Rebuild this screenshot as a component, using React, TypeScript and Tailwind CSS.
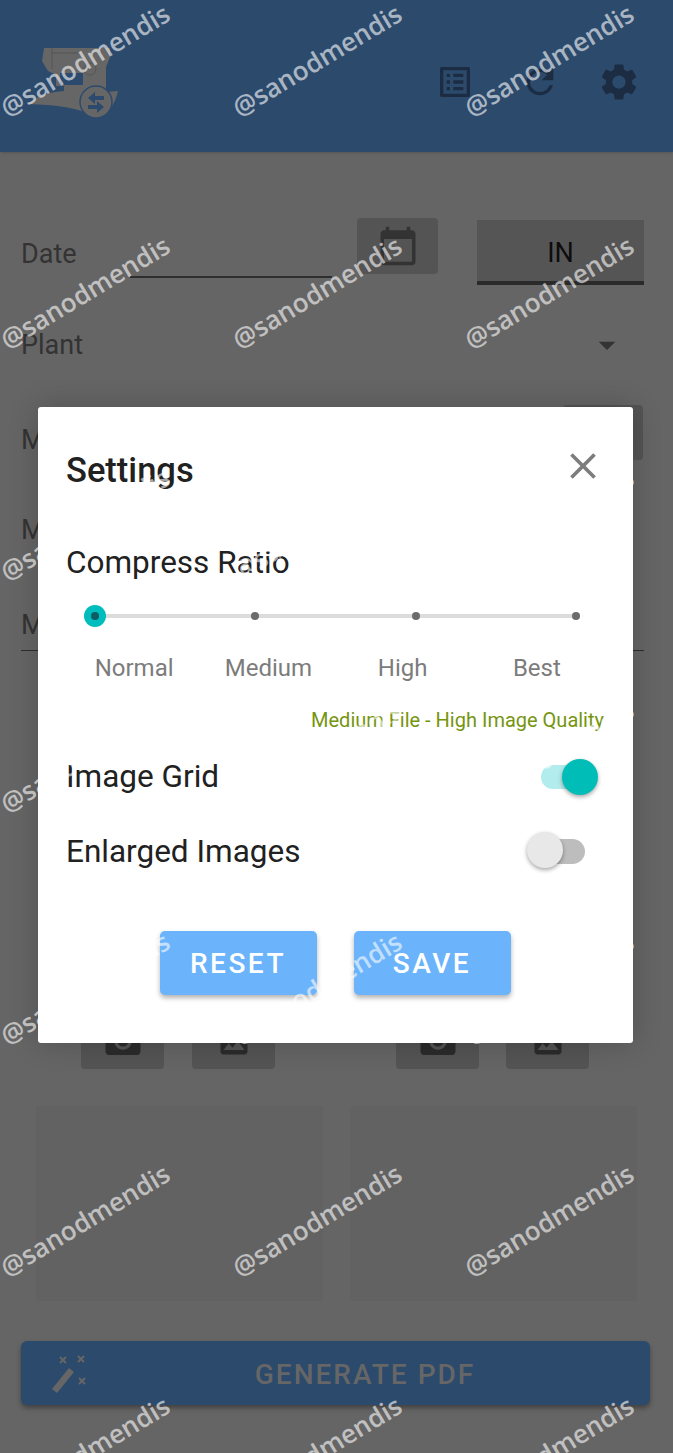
import React from "react";
import {
  MdArrowDropDown,
  MdCalendarToday,
  MdCameraAlt,
  MdClose,
  MdImage,
  MdListAlt,
  MdRefresh,
  MdSettings,
} from "react-icons/md";

const sliderStops = ["Normal", "Medium", "High", "Best"];

function Logo() {
  return (
    <svg viewBox="0 0 90 80" className="h-[80px] w-[90px]">
      <path
        d="M16 3 H82 V12 L78 22 V47 L90 46 C87 60 80 68 70 73 C50 62 28 60 0 59 C10 50 22 47 36 46 V41 H28 V30 L20 26 L14 16 Z"
        fill="#666"
      />
      <circle cx="68" cy="57" r="16" fill="#666" stroke="#2c4a6e" strokeWidth="1.5" />
      <path d="M60 53 L67 47 V51 H76 V55 H67 V59 Z M76 62 L69 56 V60 H60 V64 H69 V68 Z" fill="#2c4a6e" />
      <rect x="32" y="28" width="23" height="12" fill="#2c4a6e" />
      <circle cx="62" cy="24" r="6" fill="none" stroke="#555" strokeWidth="1" />
      <path d="M24 3 V24 M24 8 H50" stroke="#555" strokeWidth="1" fill="none" />
    </svg>
  );
}

function Wand() {
  return (
    <svg viewBox="0 0 40 40" className="h-[40px] w-[40px]" fill="none" stroke="#666">
      <path d="M2 35 L19 14 L24 18 L7 39 Z" fill="#666" stroke="none" />
      <path d="M10 3 L16 9 M16 3 L10 9 M28 2 L34 8 M34 2 L28 8 M29 24 L35 30 M35 24 L29 30" strokeWidth="2" />
    </svg>
  );
}

function DarkButton({ className, children }: { className: string; children?: React.ReactNode }) {
  return (
    <div className={`flex items-center justify-center rounded-[4px] bg-[#555454] ${className}`}>{children}</div>
  );
}

function Background() {
  return (
    <div className="flex h-full flex-col bg-[#666565]">
      <header className="flex h-[152px] shrink-0 items-start bg-[#2c4a6c] pt-[44px] shadow-sm">
        <div className="ml-[28px] mt-[1px]">
          <Logo />
        </div>
        <div className="ml-auto mr-[32px] mt-[16px] flex items-center text-[#1c2d43]">
          <MdListAlt className="h-[40px] w-[40px]" />
          <MdRefresh className="ml-[45px] h-[40px] w-[40px]" />
          <MdSettings className="ml-[37px] h-[44px] w-[44px]" />
        </div>
      </header>

      <main className="flex flex-1 flex-col">
        {/* date row */}
        <div className="mt-[66px] flex h-[67px] items-start px-[21px] text-[27px] text-[#333]">
          <div className="flex w-[311px] items-end self-stretch pb-[6px]">
            <span className="mb-[6px] mt-[16px] w-[109px] self-center leading-[30px]">Date</span>
            <div className="mb-[1px] h-[2px] flex-1 bg-[#2e2e2e]" />
          </div>
          <DarkButton className="ml-[25px] h-[56px] w-[81px] text-[#333]">
            <MdCalendarToday className="h-[42px] w-[42px]" />
          </DarkButton>
          <div className="ml-[39px] mt-[2px] flex h-[65px] w-[167px] items-center justify-center border-b-[4px] border-[#2a2a2a] bg-[#565555] pt-[6px] text-[#0d0d0d]">
            IN
          </div>
        </div>

        {/* plant row */}
        <div className="mt-[45px] flex h-[30px] items-center justify-between pl-[21px] pr-[46px] text-[27px] text-[#333]">
          <span>Plant</span>
          <MdArrowDropDown className="h-[40px] w-[40px]" />
        </div>

        {/* rows hidden behind the dialog */}
        <div className="mt-[45px] flex h-[55px] items-center justify-between pl-[21px] pr-[30px] text-[27px] text-[#333]">
          <span className="mt-[16px]">M</span>
          <DarkButton className="h-[55px] w-[80px]" />
        </div>
        <div className="mt-[55px] h-[30px] pl-[21px] text-[27px] leading-[30px] text-[#333]">M</div>
        <div className="mt-[65px] h-[30px] pl-[21px] text-[27px] leading-[30px] text-[#333]">M</div>
        <div className="ml-[21px] mr-[29px] mt-[10px] h-[1px] bg-[#2e2e2e]" />

        <div className="mt-[362px] flex h-[56px] items-center pl-[81px]">
          <DarkButton className="h-[56px] w-[83px] text-[#2b2b2b]">
            <MdCameraAlt className="h-[42px] w-[42px]" />
          </DarkButton>
          <DarkButton className="ml-[28px] h-[56px] w-[83px] text-[#2b2b2b]">
            <MdImage className="h-[36px] w-[36px]" />
          </DarkButton>
          <DarkButton className="ml-[121px] h-[56px] w-[83px] text-[#2b2b2b]">
            <MdCameraAlt className="h-[42px] w-[42px]" />
          </DarkButton>
          <DarkButton className="ml-[27px] h-[56px] w-[83px] text-[#2b2b2b]">
            <MdImage className="h-[36px] w-[36px]" />
          </DarkButton>
        </div>

        <div className="mt-[37px] flex h-[195px] gap-[27px] pl-[36px] pr-[36px]">
          <div className="flex-1 rounded-[2px] bg-[#636262]" />
          <div className="flex-1 rounded-[2px] bg-[#636262]" />
        </div>

        <div className="relative ml-[21px] mr-[23px] mt-[40px] flex h-[64px] items-center justify-center rounded-[6px] bg-[#2c4a6c] pt-[3px] shadow-[0_3px_5px_rgba(0,0,0,0.35)]">
          <div className="absolute left-[29px] top-[13px]">
            <Wand />
          </div>
          <span className="ml-[59px] text-[28px] font-medium tracking-[2px] text-[#666]">GENERATE PDF</span>
        </div>
      </main>
    </div>
  );
}

function Dialog() {
  return (
    <div className="absolute left-[38px] top-[407px] flex h-[636px] w-[595px] flex-col rounded-[3px] bg-white px-[29px] shadow-[0_0_30px_rgba(0,0,0,0.2)]">
      <div className="mt-[42px] flex h-[42px] items-center justify-between">
        <h2 className="ml-[-1px] text-[34.5px] font-medium leading-[42px] text-[#212121]">Settings</h2>
        <MdClose className="mr-[-1px] mt-[-9px] h-[44px] w-[44px] text-[#7d7d7d]" />
      </div>

      <div className="ml-[-1px] mt-[52px] text-[31.5px] leading-[40px] text-[#212121]">Compress Ratio</div>

      {/* slider */}
      <div className="relative ml-[28px] mr-[28px] mt-[22px] flex h-[22px] items-center justify-between">
        <div className="absolute inset-x-0 top-[9px] h-[4px] bg-[#dcdcdc]" />
        <span className="relative ml-[-11px] mr-[-7px] flex h-[22px] w-[22px] items-center justify-center rounded-full bg-[#00bdbd]">
          <span className="h-[8px] w-[8px] rounded-full bg-[#0b5c63]" />
        </span>
        <span className="relative h-[8px] w-[8px] rounded-full bg-[#6b6b6b]" />
        <span className="relative h-[8px] w-[8px] rounded-full bg-[#6b6b6b]" />
        <span className="relative mr-[-4px] h-[8px] w-[8px] rounded-full bg-[#6b6b6b]" />
      </div>
      <div className="mt-[26px] grid grid-cols-4 text-center text-[24px] leading-[30px] text-[#7c7c7c]">
        {sliderStops.map((stop) => (
          <span key={stop}>{stop}</span>
        ))}
      </div>

      <div className="mt-[24px] text-right text-[20px] leading-[26px] text-[#76950f]">
        Medium File - High Image Quality
      </div>

      <div className="mt-[24px] flex h-[40px] items-center justify-between text-[31.5px] text-[#212121]">
        <span className="ml-[-1px] leading-[40px]">Image Grid</span>
        <div className="relative mr-[14px] h-[24px] w-[49px] rounded-full bg-[#b3ecec]">
          <span className="absolute right-[-8px] top-[-6px] h-[36px] w-[36px] rounded-full bg-[#00bdb8] shadow-[0_2px_4px_rgba(0,0,0,0.35)]" />
        </div>
      </div>

      <div className="mt-[35px] flex h-[40px] items-center justify-between text-[31.5px] text-[#212121]">
        <span className="ml-[-1px] leading-[40px]">Enlarged Images</span>
        <div className="relative mr-[19px] mt-[-2px] h-[25px] w-[45px] rounded-full bg-[#bdbdbd]">
          <span className="absolute left-[-13px] top-[-7px] h-[36px] w-[36px] rounded-full bg-[#e8e8e8] shadow-[0_2px_4px_rgba(0,0,0,0.35)]" />
        </div>
      </div>

      <div className="mt-[59px] flex justify-center gap-[37px] pr-[1px]">
        <button className="h-[64px] w-[157px] rounded-[5px] bg-[#6bb3fb] pt-[2px] text-[28px] font-medium tracking-[2.5px] text-white shadow-[0_3px_5px_rgba(0,0,0,0.3)]">
          RESET
        </button>
        <button className="h-[64px] w-[157px] rounded-[5px] bg-[#6bb3fb] pt-[2px] text-[28px] font-medium tracking-[2.5px] text-white shadow-[0_3px_5px_rgba(0,0,0,0.3)]">
          SAVE
        </button>
      </div>
    </div>
  );
}

// repeating tilted label that runs over the whole shot
function Watermarks() {
  const cells = Array.from({ length: 21 }, (_, i) => i);
  return (
    <div className="pointer-events-none absolute inset-0 overflow-hidden">
      <div className="ml-[-31px] mt-[-56px] grid w-[696px] grid-cols-3 auto-rows-[232px]">
        {cells.map((i) => (
          <div key={i} className="flex items-center justify-center">
            <span className="-rotate-[31deg] whitespace-nowrap font-['Open_Sans',sans-serif] text-[26px] font-semibold text-white/60">
              @sanodmendis
            </span>
          </div>
        ))}
      </div>
    </div>
  );
}

export default function App() {
  return (
    <div className="relative h-[1453px] w-[673px] overflow-hidden font-['Roboto',sans-serif]">
      <Background />
      <Dialog />
      <Watermarks />
    </div>
  );
}
